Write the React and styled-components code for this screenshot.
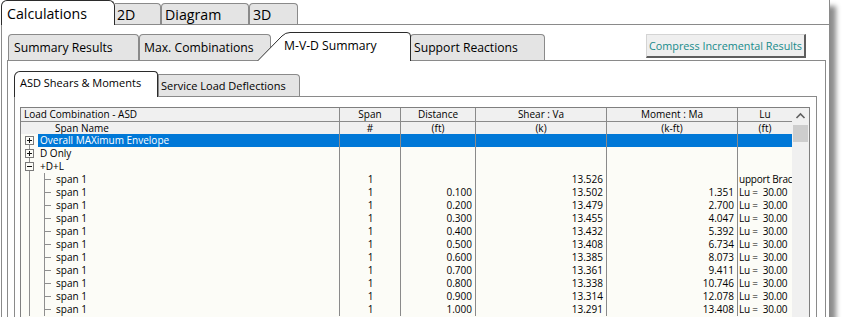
import React from "react";
import styled, { createGlobalStyle } from "styled-components";

const GlobalStyle = createGlobalStyle`
  html, body {
    margin: 0;
    padding: 0;
    background: #fff;
  }
  body {
    font-family: "Open Sans", "Noto Sans", sans-serif;
    color: #000;
  }
`;

const LINE = "#8a8a8a";
const COLS = "319px 61px 75px 131px 131px 54px";

const Window = styled.div`
  margin-left: 1px;
  width: 829px;
  height: 317px;
  box-sizing: border-box;
  border-right: 1px solid ${LINE};
  display: flex;
  flex-direction: column;
  overflow: hidden;
  background: #fff;
  box-shadow: 6px 6px 5px rgba(0, 0, 0, 0.45);
`;

const TopStrip = styled.div`
  height: 25px;
  box-sizing: border-box;
  border-bottom: 1px solid ${LINE};
  display: flex;
  align-items: flex-end;
  flex-shrink: 0;
`;

const TopTab = styled.div`
  box-sizing: border-box;
  width: ${(p) => p.$w}px;
  height: ${(p) => (p.$active ? 25 : 21)}px;
  margin-bottom: ${(p) => (p.$active ? -1 : 0)}px;
  padding-left: ${(p) => p.$pad}px;
  display: flex;
  align-items: center;
  font-size: 14.2px;
  background: ${(p) => (p.$active ? "#fff" : "#e4e4e4")};
  border: 1px solid ${(p) => (p.$active ? "#2b2b2b" : LINE)};
  border-left-style: ${(p) => (p.$noLeft ? "none" : "solid")};
  border-bottom: none;
  border-radius: ${(p) => (p.$active ? "6px 6px 0 0" : p.$noLeft ? "0 4px 0 0" : "4px 4px 0 0")};
  position: relative;
  z-index: ${(p) => (p.$active ? 2 : 1)};
`;

const OuterPanel = styled.div`
  flex: 1;
  display: flex;
  flex-direction: column;
  border-left: 1px solid ${LINE};
  padding: 0 3px 0 5px;
`;

const SubStrip = styled.div`
  height: 35px;
  display: flex;
  align-items: flex-end;
  flex-shrink: 0;
`;

const SubTab = styled.div`
  box-sizing: border-box;
  width: ${(p) => p.$w}px;
  height: 26px;
  margin-left: ${(p) => p.$ml || 0}px;
  padding-left: ${(p) => p.$pad || 4}px;
  display: flex;
  align-items: center;
  font-size: 12.2px;
  background: #e4e4e4;
  border: 1px solid ${LINE};
  border-bottom: none;
  border-radius: 4px 4px 0 0;
  position: relative;
  z-index: 1;
`;

const SlantTab = styled.div`
  position: relative;
  z-index: 3;
  box-sizing: border-box;
  width: 154px;
  height: 29px;
  margin-left: -14px;
  margin-bottom: -1px;
  padding: 0 0 3px 27px;
  display: flex;
  align-items: center;
  font-size: 12.2px;
`;

const SlantShape = styled.svg`
  position: absolute;
  left: 0;
  top: 0;
  z-index: -1;
`;

const CompressButton = styled.div`
  margin-left: auto;
  margin-right: 20px;
  margin-bottom: 2px;
  width: 160px;
  height: 24px;
  box-sizing: border-box;
  display: flex;
  align-items: center;
  justify-content: center;
  font-size: 10.8px;
  color: #178b8b;
  background: #efefef;
  border-top: 1px solid #d4d4d4;
  border-left: 1px solid #d4d4d4;
  border-right: 2px solid #5e5e5e;
  border-bottom: 2px solid #5e5e5e;
`;

const Frame = styled.div`
  flex: 1;
  display: flex;
  flex-direction: column;
  border: 1px solid ${LINE};
  border-bottom: none;
  padding: ${(p) => p.$pad};
`;

const InnerStrip = styled.div`
  height: 35px;
  display: flex;
  align-items: flex-end;
  flex-shrink: 0;
`;

const InnerTab = styled.div`
  box-sizing: border-box;
  width: ${(p) => p.$w}px;
  height: ${(p) => (p.$active ? 26 : 22)}px;
  margin-bottom: ${(p) => (p.$active ? -1 : 0)}px;
  padding: ${(p) => (p.$active ? "0 0 4px 5px" : "0 0 0 2px")};
  display: flex;
  align-items: center;
  font-size: 11px;
  font-weight: ${(p) => (p.$active ? 400 : 500)};
  background: ${(p) => (p.$active ? "#fff" : "#e4e4e4")};
  border: 1px solid ${(p) => (p.$active ? "#2b2b2b" : LINE)};
  border-bottom: none;
  border-radius: ${(p) => (p.$active ? "6px 4px 0 0" : "0 4px 0 0")};
  position: relative;
  z-index: ${(p) => (p.$active ? 2 : 1)};
`;

const Table = styled.div`
  flex: 1;
  display: flex;
  border: 1px solid #7f7f7f;
  border-bottom: none;
  font-size: 10px;
  background: #fcfcf7;
`;

const Grid = styled.div`
  display: flex;
  flex-direction: column;
`;

const HeadRow = styled.div`
  display: grid;
  grid-template-columns: ${COLS};
  height: ${(p) => p.$h}px;
  box-sizing: border-box;
  background: #f0f0f0;
  border-bottom: ${(p) => (p.$line ? `1px solid ${LINE}` : "none")};
  overflow: hidden;
`;

const HeadCell = styled.div`
  box-sizing: border-box;
  border-right: ${(p) => (p.$last ? "none" : `1px solid ${LINE}`)};
  text-align: ${(p) => p.$align || "center"};
  padding-left: ${(p) => p.$pl || 0}px;
  line-height: ${(p) => p.$lh}px;
  white-space: pre;
  overflow: hidden;
`;

const DataRow = styled.div`
  display: grid;
  grid-template-columns: ${COLS};
  height: 13px;
`;

const Cell = styled.div`
  box-sizing: border-box;
  border-right: ${(p) => (p.$last ? "none" : `1px solid ${LINE}`)};
  text-align: ${(p) => p.$align || "left"};
  padding: ${(p) => (p.$align === "right" ? "0 3px 0 0" : "0 0 0 1px")};
  line-height: 13px;
  letter-spacing: ${(p) => (p.$tight ? "-0.2px" : "0")};
  white-space: pre;
  overflow: hidden;
  background: ${(p) => (p.$sel ? "#0078d7" : "transparent")};
  color: ${(p) => (p.$sel ? "#fff" : "#000")};
`;

const NameCell = styled.div`
  box-sizing: border-box;
  border-right: 1px solid ${LINE};
  display: flex;
  align-items: stretch;
  height: 13px;
`;

const NameText = styled.div`
  flex: 1;
  padding-left: 2px;
  line-height: 13px;
  white-space: pre;
  background: ${(p) => (p.$sel ? "#0078d7" : "transparent")};
  color: ${(p) => (p.$sel ? "#fff" : "#000")};
`;

const Scrollbar = styled.div`
  width: 17px;
  background: #f0f0f0;
  display: flex;
  flex-direction: column;
  align-items: stretch;
`;

const ScrollThumb = styled.div`
  height: 17px;
  margin: 0 1px;
  background: #cdcdcd;
`;

const TreeGlyph = ({ kind }) => {
  const lineColor = "#8f8f8f";
  if (kind === "child") {
    return (
      <svg width="33" height="13" style={{ flexShrink: 0 }}>
        <line x1="8.5" y1="0" x2="8.5" y2="13" stroke={lineColor} />
        <line x1="23.5" y1="0" x2="23.5" y2="13" stroke={lineColor} />
        <line x1="23.5" y1="6.5" x2="30" y2="6.5" stroke={lineColor} />
      </svg>
    );
  }
  const top = kind === "first" ? 6.5 : 0;
  return (
    <svg width="17" height="13" style={{ flexShrink: 0 }}>
      <line x1="8.5" y1={top} x2="8.5" y2="13" stroke={lineColor} />
      <rect x="4.5" y="2.5" width="8" height="8" fill="#fcfcf7" stroke="#7a7a7a" />
      <line x1="6" y1="6.5" x2="11" y2="6.5" stroke="#111" />
      {kind !== "open" && <line x1="8.5" y1="4" x2="8.5" y2="9" stroke="#111" />}
    </svg>
  );
};

const spans = [
  ["", "13.526", "", "upport Brac"],
  ["0.100", "13.502", "1.351", "Lu =  30.00"],
  ["0.200", "13.479", "2.700", "Lu =  30.00"],
  ["0.300", "13.455", "4.047", "Lu =  30.00"],
  ["0.400", "13.432", "5.392", "Lu =  30.00"],
  ["0.500", "13.408", "6.734", "Lu =  30.00"],
  ["0.600", "13.385", "8.073", "Lu =  30.00"],
  ["0.700", "13.361", "9.411", "Lu =  30.00"],
  ["0.800", "13.338", "10.746", "Lu =  30.00"],
  ["0.900", "13.314", "12.078", "Lu =  30.00"],
  ["1.000", "13.291", "13.408", "Lu =  30.00"],
];

const roots = [
  { label: "Overall MAXimum Envelope", kind: "first", sel: true },
  { label: "D Only", kind: "closed" },
  { label: "+D+L", kind: "open" },
];

const App = () => {
  return (
    <>
      <GlobalStyle />
      <Window>
        <TopStrip>
          <TopTab $active $w={114} $pad={5}>Calculations</TopTab>
          <TopTab $w={46} $pad={2} $noLeft>2D</TopTab>
          <TopTab $w={88} $pad={3}>Diagram</TopTab>
          <TopTab $w={49} $pad={3}>3D</TopTab>
        </TopStrip>
        <OuterPanel>
          <SubStrip>
            <SubTab $w={131} $ml={1} $pad={5}>Summary Results</SubTab>
            <SubTab $w={132} $pad={4}>Max. Combinations</SubTab>
            <SlantTab>
              <SlantShape width="154" height="29" viewBox="0 0 154 29">
                <path d="M0 29 L25 4 Q28.5 0.5 33 0.5 L150 0.5 Q153.5 0.5 153.5 4 L153.5 29 Z" fill="#fff" />
                <path d="M0.5 29 L25 4 Q28.5 0.5 33 0.5 L150 0.5 Q153.5 0.5 153.5 4 L153.5 29" fill="none" stroke="#2b2b2b" />
              </SlantShape>
              M-V-D Summary
            </SlantTab>
            <SubTab $w={135} $ml={-1} $pad={3}>Support Reactions</SubTab>
            <CompressButton>Compress Incremental Results</CompressButton>
          </SubStrip>
          <Frame $pad="0 8px 0 6px">
            <InnerStrip>
              <InnerTab $active $w={144}>ASD Shears &amp; Moments</InnerTab>
              <InnerTab $w={142}>Service Load Deflections</InnerTab>
            </InnerStrip>
            <Frame $pad="10px 6px 0 5px">
              <Table>
                <Grid>
                  <HeadRow $h={14} $line>
                    <HeadCell $align="left" $pl={3} $lh={13}>Load Combination - ASD</HeadCell>
                    <HeadCell $lh={13}>Span</HeadCell>
                    <HeadCell $lh={13}>Distance</HeadCell>
                    <HeadCell $lh={13}>Shear : Va</HeadCell>
                    <HeadCell $lh={13}>Moment : Ma</HeadCell>
                    <HeadCell $lh={13} $last>Lu</HeadCell>
                  </HeadRow>
                  <HeadRow $h={12}>
                    <HeadCell $align="left" $pl={34} $lh={12}>Span Name</HeadCell>
                    <HeadCell $lh={12}>#</HeadCell>
                    <HeadCell $lh={12}>(ft)</HeadCell>
                    <HeadCell $lh={12}>(k)</HeadCell>
                    <HeadCell $lh={12}>(k-ft)</HeadCell>
                    <HeadCell $lh={12} $last>(ft)</HeadCell>
                  </HeadRow>
                  {roots.map((r) => (
                    <DataRow key={r.label}>
                      <NameCell>
                        <TreeGlyph kind={r.kind} />
                        <NameText $sel={r.sel}>{r.label}</NameText>
                      </NameCell>
                      <Cell $sel={r.sel} />
                      <Cell $sel={r.sel} />
                      <Cell $sel={r.sel} />
                      <Cell $sel={r.sel} />
                      <Cell $sel={r.sel} $last />
                    </DataRow>
                  ))}
                  {spans.map(([d, v, m, lu], i) => (
                    <DataRow key={i}>
                      <NameCell>
                        <TreeGlyph kind="child" />
                        <NameText>span 1</NameText>
                      </NameCell>
                      <Cell $align="center">1</Cell>
                      <Cell $align="right">{d}</Cell>
                      <Cell $align="right">{v}</Cell>
                      <Cell $align="right">{m}</Cell>
                      <Cell $last $tight>{lu}</Cell>
                    </DataRow>
                  ))}
                </Grid>
                <Scrollbar>
                  <svg width="17" height="17" viewBox="0 0 17 17">
                    <path d="M4.5 10 L8.5 6 L12.5 10" fill="none" stroke="#606060" strokeWidth="1.6" />
                  </svg>
                  <ScrollThumb />
                </Scrollbar>
              </Table>
            </Frame>
          </Frame>
        </OuterPanel>
      </Window>
    </>
  );
};

export default App;
